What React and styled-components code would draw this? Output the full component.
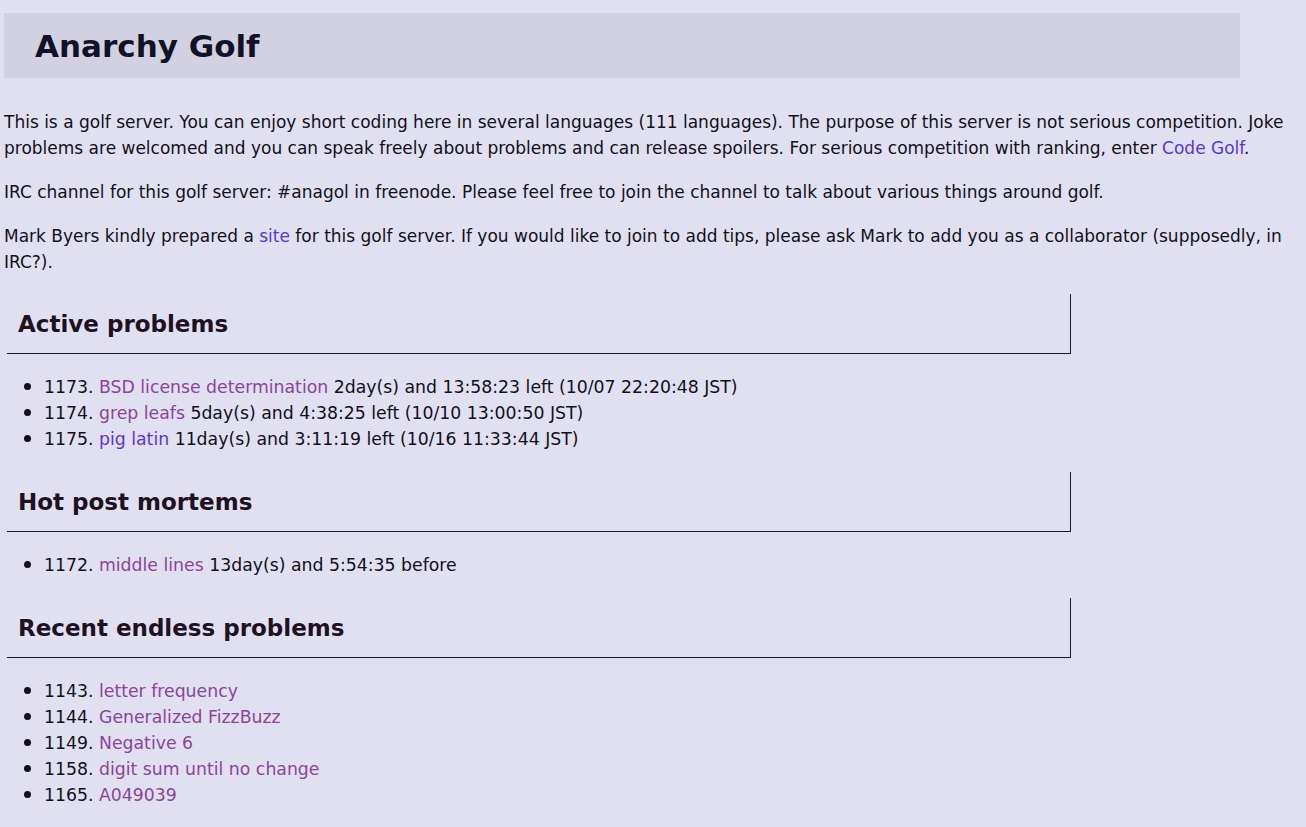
import React from 'react'
import styled, { createGlobalStyle } from 'styled-components'

const GlobalStyle = createGlobalStyle`
  html, body {
    margin: 0;
    padding: 0;
    background: #e1e0f0;
  }
  body {
    padding: 4px;
    font-family: 'DejaVu Sans', 'Noto Sans', sans-serif;
    font-size: 17px;
    line-height: 26px;
    color: #111018;
  }
`

const Page = styled.div`
  display: flex;
  flex-direction: column;
`

const Title = styled.h1`
  width: 95.2%;
  box-sizing: border-box;
  margin: 9px 0 0 0;
  height: 65px;
  padding-left: 31px;
  display: flex;
  align-items: center;
  background: #d2d1e1;
  font-size: 31px;
  font-weight: bold;
  color: #111127;
`

const Para = styled.p`
  margin: ${props => props.first ? '31px' : '18px'} 0 0 0;
`

const Link = styled.a`
  color: ${props => props.visited ? '#8a459c' : '#5a35dc'};
  text-decoration: none;
`

const Section = styled.h2`
  margin: 19px 0 0 3px;
  width: 82%;
  box-sizing: border-box;
  height: 60px;
  display: flex;
  align-items: center;
  padding: 0 0 0 11px;
  border-right: 1px solid #1d1a2a;
  border-bottom: 1px solid #1d1a2a;
  font-size: 23px;
  font-weight: bold;
  color: #1e1222;

  ul + & {
    margin-top: 20px;
  }
`

const List = styled.ul`
  margin: 20px 0 0 0;
  padding-left: 40px;
`

const Item = styled.li`
  font-size: 17.3px;

  &::marker {
    font-size: 22px;
    line-height: 20px;
  }
`

const problems = {
  active: [
    { n: 1173, title: 'BSD license determination', visited: true, rest: '2day(s) and 13:58:23 left (10/07 22:20:48 JST)' },
    { n: 1174, title: 'grep leafs', visited: true, rest: '5day(s) and 4:38:25 left (10/10 13:00:50 JST)' },
    { n: 1175, title: 'pig latin', visited: false, rest: '11day(s) and 3:11:19 left (10/16 11:33:44 JST)' }
  ],
  hot: [
    { n: 1172, title: 'middle lines', visited: true, rest: '13day(s) and 5:54:35 before' }
  ],
  endless: [
    { n: 1143, title: 'letter frequency', visited: true },
    { n: 1144, title: 'Generalized FizzBuzz', visited: true },
    { n: 1149, title: 'Negative 6', visited: true },
    { n: 1158, title: 'digit sum until no change', visited: true },
    { n: 1165, title: 'A049039', visited: true }
  ]
}

const ProblemList = ({ items }) => (
  <List>
    {items.map(p => (
      <Item key={p.n}>
        {p.n}. <Link href='#' visited={p.visited ? 1 : 0}>{p.title}</Link>{p.rest ? ` ${p.rest}` : ''}
      </Item>
    ))}
  </List>
)

const App = () => (
  <Page>
    <GlobalStyle />
    <Title>Anarchy Golf</Title>
    <Para first>
      This is a golf server. You can enjoy short coding here in several languages (111 languages). The purpose of this server is not serious competition. Joke problems are welcomed and you can speak freely about problems and can release spoilers. For serious competition with ranking, enter <Link href='#'>Code Golf</Link>.
    </Para>
    <Para>
      IRC channel for this golf server: #anagol in freenode. Please feel free to join the channel to talk about various things around golf.
    </Para>
    <Para>
      Mark Byers kindly prepared a <Link href='#'>site</Link> for this golf server. If you would like to join to add tips, please ask Mark to add you as a collaborator (supposedly, in IRC?).
    </Para>
    <Section>Active problems</Section>
    <ProblemList items={problems.active} />
    <Section>Hot post mortems</Section>
    <ProblemList items={problems.hot} />
    <Section>Recent endless problems</Section>
    <ProblemList items={problems.endless} />
  </Page>
)

export default App
